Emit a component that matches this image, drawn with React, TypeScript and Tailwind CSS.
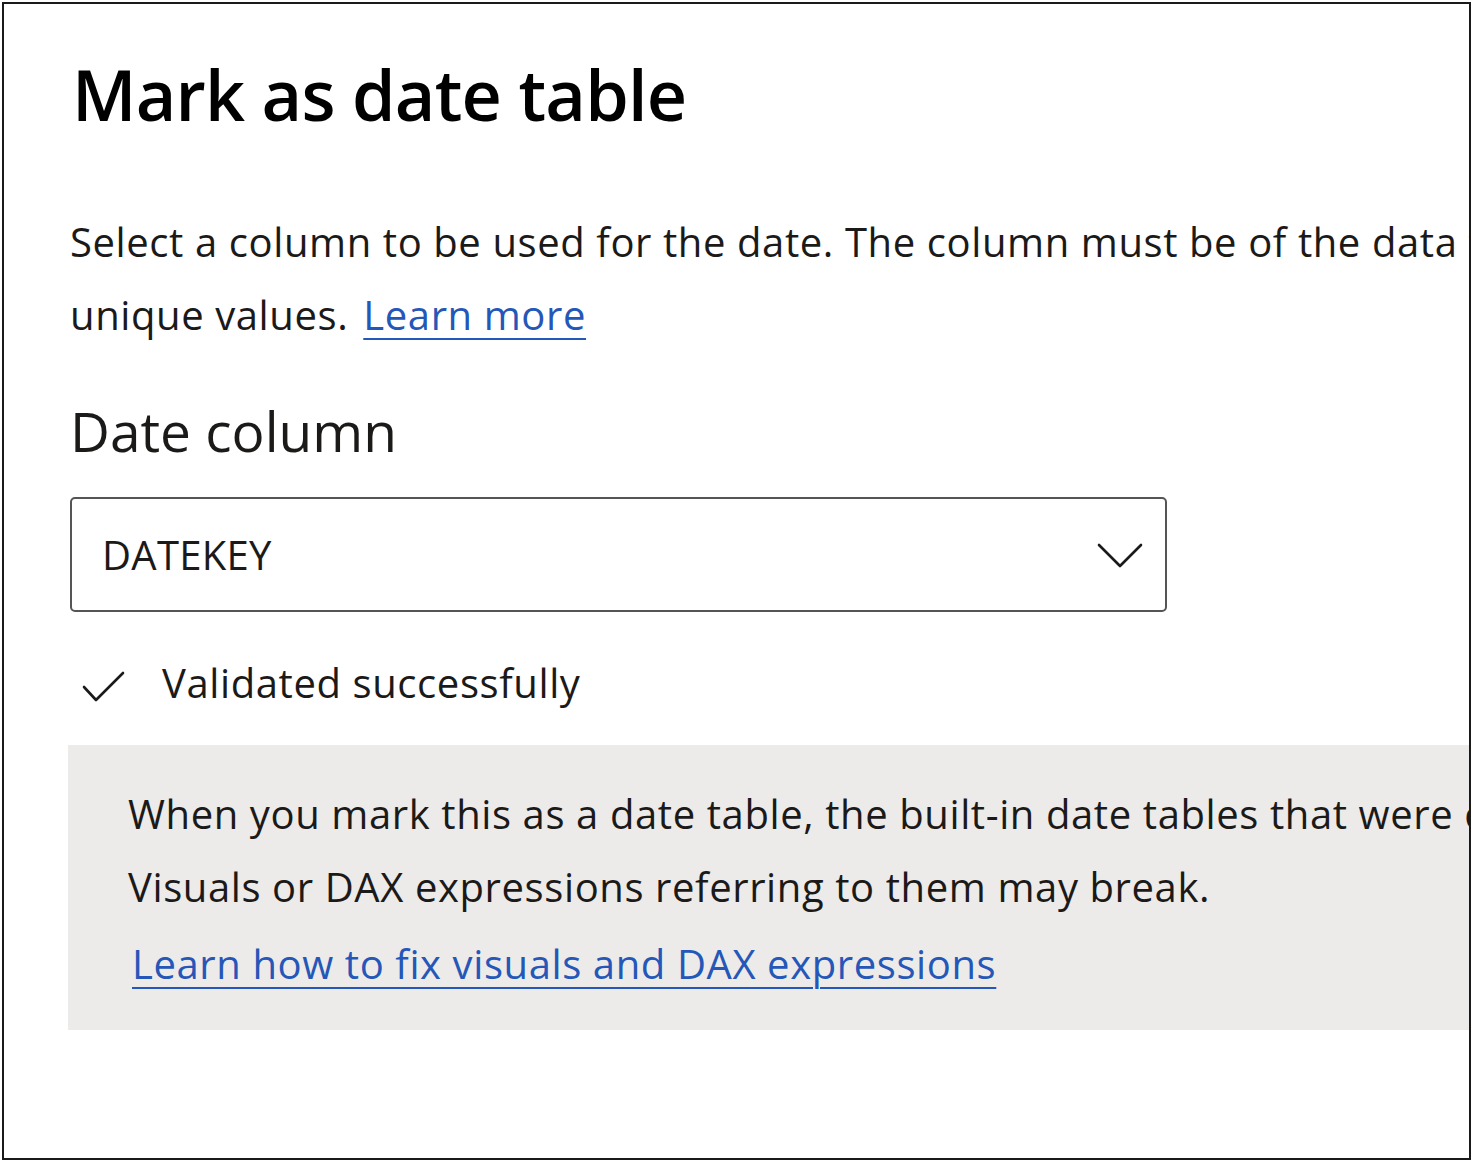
const font = { fontFamily: '"Open Sans", "Noto Sans", sans-serif' };

export default function App() {
  return (
    <div className="w-[1476px] h-[1165px] bg-white p-[2px]" style={font}>
      <div className="w-[1469px] h-[1158px] border-2 border-[#1a1a1a] overflow-hidden pl-[64px] text-[#1b1a19]">
        <h1 className="mt-[40px] ml-[4px] h-[100px] leading-[100px] text-[70px] font-semibold text-black tracking-[-0.8px] whitespace-nowrap">
          Mark as date table
        </h1>

        <p className="mt-[61px] ml-[2px] w-[1600px] text-[40px] tracking-[0.6px] leading-[73px] whitespace-nowrap">
          Select a column to be used for the date. The column must be of the data type date and must contain only
          <br />
          unique values.{' '}
          <a href="#" className="ml-[4px] text-[#2557b8] underline decoration-2 underline-offset-[8px]">
            Learn more
          </a>
        </p>

        <h2 className="mt-[40px] ml-[2px] h-[80px] leading-[80px] text-[55px] font-normal whitespace-nowrap">
          Date column
        </h2>

        <div className="mt-[26px] ml-[2px] w-[1097px] h-[115px] border-2 border-[#555] rounded-[5px] flex items-center justify-between pl-[30px] pr-[22px]">
          <span className="text-[40px] tracking-[0.3px] leading-[50px]">DATEKEY</span>
          <svg width="46" height="28" viewBox="0 0 46 28" fill="none" className="mt-[2px]">
            <polyline points="2,3 23,24 44,3" stroke="#1a1a1a" strokeWidth="2.6" strokeLinecap="round" strokeLinejoin="round" />
          </svg>
        </div>

        <div className="mt-[52px] ml-[2px] h-[38px] flex items-center">
          <svg width="44" height="34" viewBox="0 0 44 34" fill="none" className="ml-[12px] mt-[8px]">
            <polyline points="2,17 14,30 41,3" stroke="#1a1a1a" strokeWidth="2.6" strokeLinecap="round" strokeLinejoin="round" />
          </svg>
          <span className="ml-[36px] text-[40px] tracking-[0.6px] leading-[50px] whitespace-nowrap">Validated successfully</span>
        </div>

        <div className="mt-[43px] w-[1600px] h-[285px] bg-[#edebe9] pl-[60px] pt-[32px]">
          <p className="text-[40px] tracking-[0.6px] leading-[73px] whitespace-nowrap">
            When you mark this as a date table, the built-in date tables that were created for this table will be removed.
            <br />
            Visuals or DAX expressions referring to them may break.
          </p>
          <a
            href="#"
            className="block mt-[4px] ml-[4px] text-[40px] tracking-[0.6px] leading-[73px] whitespace-nowrap text-[#2557b8] underline decoration-2 underline-offset-[8px]"
          >
            Learn how to fix visuals and DAX expressions
          </a>
        </div>
      </div>
    </div>
  );
}
